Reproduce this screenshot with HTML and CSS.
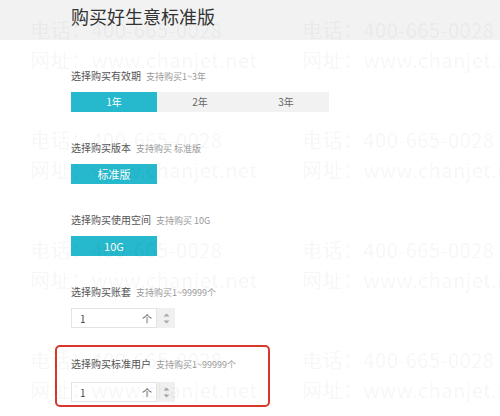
FILE: index.html
```html
<!DOCTYPE html>
<html lang="zh-CN">
<head>
    <meta charset="UTF-8">
    <meta name="viewport" content="width=device-width, initial-scale=1.0">
    <title>购买好生意标准版</title>
    <link rel="stylesheet" href="styles.css">
</head>
<body>
    <div class="header">
        <h1>购买好生意标准版</h1>
    </div>

    <div class="main">
        <div class="field">
            <div class="field-label">选择购买有效期<small>支持购买1~3年</small></div>
            <div class="segments">
                <div class="seg active">1年</div>
                <div class="seg">2年</div>
                <div class="seg">3年</div>
            </div>
        </div>

        <div class="field">
            <div class="field-label">选择购买版本<small>支持购买 标准版</small></div>
            <div class="btn">标准版</div>
        </div>

        <div class="field">
            <div class="field-label">选择购买使用空间<small>支持购买 10G</small></div>
            <div class="btn">10G</div>
        </div>

        <div class="field field-tight">
            <div class="field-label">选择购买账套<small>支持购买1~99999个</small></div>
            <div class="stepper">
                <div class="stepper-input"><span>1</span><span class="unit">个</span></div>
                <div class="stepper-arrows">
                    <svg width="7" height="4" viewBox="0 0 7 4"><path d="M0.5 3.6 L3.5 0.6 L6.5 3.6 Z" fill="#a8a8a8"/></svg>
                    <svg width="7" height="4" viewBox="0 0 7 4"><path d="M0.5 0.4 L3.5 3.4 L6.5 0.4 Z" fill="#a8a8a8"/></svg>
                </div>
            </div>
        </div>

        <div class="highlight">
            <div class="field-label">选择购买标准用户<small>支持购买1~99999个</small></div>
            <div class="stepper">
                <div class="stepper-input"><span>1</span><span class="unit">个</span></div>
                <div class="stepper-arrows">
                    <svg width="7" height="4" viewBox="0 0 7 4"><path d="M0.5 3.6 L3.5 0.6 L6.5 3.6 Z" fill="#a8a8a8"/></svg>
                    <svg width="7" height="4" viewBox="0 0 7 4"><path d="M0.5 0.4 L3.5 3.4 L6.5 0.4 Z" fill="#a8a8a8"/></svg>
                </div>
            </div>
        </div>
    </div>

    <!-- watermark layer over the page -->
    <div class="watermark">
        <div class="wm"><p>电话：400-665-0028</p><p>网址：www.chanjet.net</p></div>
        <div class="wm"><p>电话：400-665-0028</p><p>网址：www.chanjet.net</p></div>
        <div class="wm"><p>电话：400-665-0028</p><p>网址：www.chanjet.net</p></div>
        <div class="wm"><p>电话：400-665-0028</p><p>网址：www.chanjet.net</p></div>
        <div class="wm"><p>电话：400-665-0028</p><p>网址：www.chanjet.net</p></div>
        <div class="wm"><p>电话：400-665-0028</p><p>网址：www.chanjet.net</p></div>
        <div class="wm"><p>电话：400-665-0028</p><p>网址：www.chanjet.net</p></div>
        <div class="wm"><p>电话：400-665-0028</p><p>网址：www.chanjet.net</p></div>
    </div>
</body>
</html>
```

FILE: styles.css
```css
body {
    margin: 0;
    background-color: #ffffff;
    color: #555555;
    font-family: "Noto Sans CJK SC", "Noto Sans", sans-serif;
    position: relative;
    height: 416px;
    overflow: hidden;
}
.header {
    background-color: #f2f2f2;
    height: 40px;
    padding-left: 71px;
}
h1 {
    margin: 0;
    font-size: 18px;
    font-weight: normal;
    line-height: 32px;
    color: #333333;
}
.main {
    padding: 28px 0 0 71px;
}
.field {
    margin-bottom: 28px;
}
.field-tight {
    margin-bottom: 17px;
}
.field-label {
    font-size: 10px;
    line-height: 16px;
    height: 16px;
    color: #555555;
    margin-bottom: 8px;
    white-space: nowrap;
}
.field-label small {
    font-size: 9px;
    color: #999999;
    margin-left: 5px;
}
.segments {
    display: flex;
    width: 258px;
}
.seg {
    flex: 1;
    height: 20px;
    line-height: 20px;
    text-align: center;
    font-size: 10px;
    background-color: #f2f2f2;
    color: #666666;
}
.seg.active {
    background-color: #26b9cd;
    color: #ffffff;
}
.btn {
    width: 86px;
    height: 20px;
    line-height: 20px;
    text-align: center;
    font-size: 11px;
    background-color: #26b9cd;
    color: #ffffff;
}
.stepper {
    display: flex;
    height: 20px;
}
.stepper-input {
    width: 86px;
    box-sizing: border-box;
    border: 1px solid #e3e3e3;
    display: flex;
    align-items: center;
    justify-content: space-between;
    padding: 0 4px 0 8px;
    font-size: 10px;
    color: #444444;
}
.stepper-input .unit {
    font-size: 10px;
    color: #555555;
}
.stepper-arrows {
    width: 18px;
    background-color: #f0f0f0;
    display: flex;
    flex-direction: column;
    align-items: center;
    justify-content: center;
    gap: 3px;
}
.stepper-arrows svg {
    display: block;
}
.highlight {
    width: 215px;
    box-sizing: border-box;
    margin-left: -16px;
    border: 2px solid #d8372c;
    border-radius: 5px;
    padding: 9px 0 3px 14px;
}
.highlight .field-label {
    margin-bottom: 10px;
}
.watermark {
    position: absolute;
    top: 0;
    left: 0;
    right: 0;
    bottom: 0;
    padding: 15px 0 0 30px;
    overflow: hidden;
    display: grid;
    grid-template-columns: repeat(2, 272px);
    grid-auto-rows: 110px;
    pointer-events: none;
}
.wm p {
    margin: 0;
    font-size: 20px;
    line-height: 30px;
    white-space: nowrap;
    color: rgba(0, 0, 0, 0.055);
    letter-spacing: 0.5px;
}
```
